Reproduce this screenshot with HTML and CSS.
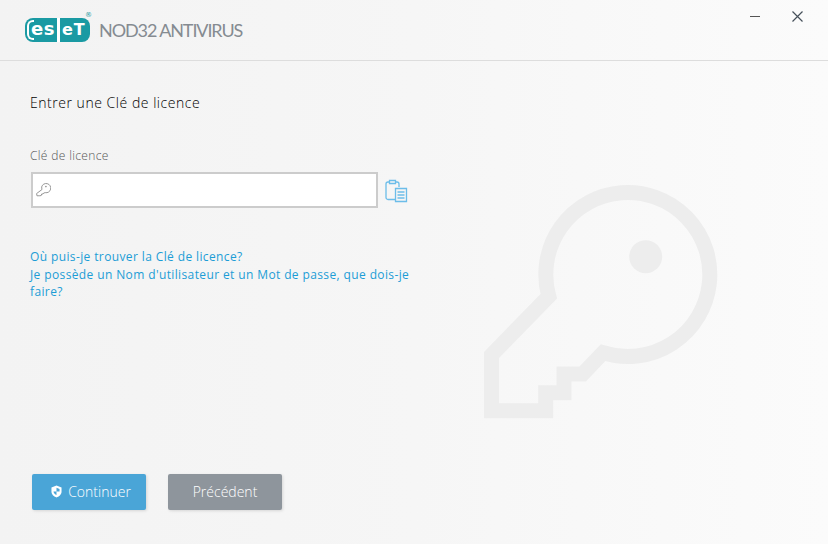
FILE: index.html
```html
<!DOCTYPE html>
<html lang="fr">
<head>
    <meta charset="UTF-8">
    <title>ESET NOD32 Antivirus</title>
    <link rel="stylesheet" href="styles.css">
</head>
<body>
    <header class="titlebar">
        <div class="logo">
            <span class="logo-ring"></span>
            <span class="logo-es">es</span>
            <span class="logo-bar"></span>
            <span class="logo-et">eT</span>
            <span class="logo-reg">®</span>
        </div>
        <div class="product">NOD32 ANTIVIRUS</div>
        <div class="window-controls">
            <svg class="win-icon" width="42" height="24" viewBox="0 0 42 24">
                <path d="M10 16.500h10" stroke="#555" stroke-width="1" fill="none"/>
            </svg>
            <svg class="win-icon" width="42" height="24" viewBox="0 0 42 24">
                <path d="M10.500 11.500l10 10M20.500 11.500l-10 10" stroke="#46505a" stroke-width="1.200" fill="none"/>
            </svg>
        </div>
    </header>

    <main class="content">
        <svg class="watermark" width="260" height="260" viewBox="470 170 260 260">
            <path d="M548.750 296.300A82 82 0 1 1 603 352.700L582.700 374H564V392.700H545.700V410.700H491.500V355Z" fill="none" stroke="#ededed" stroke-width="15"/>
            <circle cx="645.700" cy="256.700" r="16.500" fill="#ededed"/>
        </svg>

        <h1 class="title">Entrer une Clé de licence</h1>

        <label class="field-label">Clé de licence</label>
        <div class="field-row">
            <div class="key-input">
                <svg width="16" height="16" viewBox="0 0 18 18">
                    <path d="M7.500 5.500A5.200 5.200 0 1 1 11.500 12L9.800 12.400 9 13.500H7.500L7 15.200 5.500 15.500H2.200L1.800 13 7.800 8.500Z" fill="none" stroke="#8a8a8a" stroke-width="1"/>
                    <circle cx="12.300" cy="5.200" r="0.900" fill="#8a8a8a"/>
                </svg>
            </div>
            <svg class="paste" width="23" height="24" viewBox="0 0 23 24">
                <g fill="none" stroke="#6cbde9" stroke-width="1.300">
                    <path d="M10 20.500H3a2 2 0 0 1-2-2V5a2 2 0 0 1 2-2h1M11 3h1a2 2 0 0 1 2 2v3"/>
                    <path d="M4.500 1.500h6v3h-6z"/>
                    <path d="M10.500 9.500h11v13h-11z" fill="#f5f5f5"/>
                    <path d="M12.500 13h7M12.500 16h7M12.500 19h7"/>
                </g>
            </svg>
        </div>

        <div class="links">
            <a href="#">Où puis-je trouver la Clé de licence?</a>
            <a href="#">Je possède un Nom d'utilisateur et un Mot de passe, que dois-je faire?</a>
        </div>

        <div class="buttons">
            <button class="btn btn-primary">
                <svg width="11" height="13" viewBox="0 0 12 14">
                    <path d="M6 .5L11.500 2.500V7C11.500 10.500 8.500 12.700 6 13.500 3.500 12.700 .5 10.500 .5 7V2.500Z" fill="#fff"/>
                    <path d="M6 3V7H2.700C3 9 4.500 10.200 6 10.800V7H9.300V4.300Z" fill="#4aa5d7"/>
                </svg>
                Continuer
            </button>
            <button class="btn btn-secondary">Précédent</button>
        </div>
    </main>
</body>
</html>
```

FILE: styles.css
```css
html, body {
    height: 100%;
}
body {
    margin: 0;
    display: flex;
    flex-direction: column;
    height: 544px;
    overflow: hidden;
    font-family: "Open Sans", sans-serif;
    background: linear-gradient(to right, #f3f3f3 0%, #f6f6f6 50%, #fbfbfb 100%);
}
.titlebar {
    display: flex;
    align-items: center;
    height: 60px;
    padding-left: 25px;
    border-bottom: 1px solid #dddddd;
    flex-shrink: 0;
}
.logo {
    position: relative;
    width: 65px;
    height: 24px;
    background-color: #1a9aa3;
    border-radius: 8px;
    font-family: "DejaVu Sans", sans-serif;
    font-weight: bold;
    color: #fff;
}
.logo-ring {
    position: absolute;
    left: 2px;
    top: 2px;
    width: 7px;
    height: 20px;
    border: 2px solid #fff;
    border-right: 0;
    border-radius: 6px 0 0 6px;
    box-sizing: border-box;
}
.logo-es {
    position: absolute;
    left: 6px;
    top: 0;
    font-size: 18px;
    line-height: 22px;
    letter-spacing: 0.500px;
}
.logo-bar {
    position: absolute;
    left: 32px;
    top: 0;
    width: 3px;
    height: 24px;
    background-color: #fff;
}
.logo-et {
    position: absolute;
    left: 37px;
    top: 1px;
    font-size: 16px;
    line-height: 22px;
    letter-spacing: 1px;
}
.logo-reg {
    position: absolute;
    right: -2px;
    top: -7px;
    font-size: 7px;
    line-height: 8px;
    font-weight: normal;
    color: #1a9aa3;
}
.product {
    margin-left: 9px;
    font-family: "Lato", sans-serif;
    font-size: 18px;
    letter-spacing: -1.100px;
    color: #858b91;
}
.window-controls {
    display: flex;
    margin-left: auto;
    margin-right: 4px;
    align-self: flex-start;
}
.win-icon {
    display: block;
}
.content {
    position: relative;
    flex: 1;
    padding: 0 30px;
}
.watermark {
    position: absolute;
    left: 470px;
    top: 109px;
}
.title {
    position: relative;
    margin: 32px 0 0;
    font-size: 14px;
    font-weight: 300;
    line-height: 20px;
    letter-spacing: 0.530px;
    color: #000;
}
.field-label {
    position: relative;
    display: block;
    margin-top: 34px;
    font-size: 12px;
    font-weight: 300;
    line-height: 18px;
    letter-spacing: 0.350px;
    color: #555;
}
.field-row {
    position: relative;
    display: flex;
    align-items: center;
    margin-top: 7px;
}
.key-input {
    display: flex;
    align-items: center;
    box-sizing: border-box;
    width: 347px;
    height: 36px;
    margin-left: 1px;
    padding-left: 2px;
    background-color: #fff;
    border: 2px solid #cccccc;
}
.paste {
    margin-left: 7px;
    margin-top: 1px;
}
.links {
    position: relative;
    width: 385px;
    margin-top: 40px;
    font-size: 12px;
    font-weight: 400;
    line-height: 17.500px;
    letter-spacing: 0.380px;
}
.links a {
    display: block;
    color: #1c9dd6;
    text-decoration: none;
}
.buttons {
    position: relative;
    display: flex;
    gap: 22px;
    margin-top: 173px;
    margin-left: 2px;
}
.btn {
    display: flex;
    align-items: center;
    justify-content: center;
    gap: 6px;
    width: 114px;
    height: 36px;
    padding: 0;
    border: 0;
    border-radius: 2px;
    font-family: "Open Sans", sans-serif;
    font-size: 14px;
    font-weight: 300;
    color: #fff;
    box-shadow: 1px 1px 3px rgba(0, 0, 0, 0.12);
}
.btn-primary {
    padding-left: 4px;
    background-color: #4aa5d7;
}
.btn-secondary {
    background-color: #8e959c;
}
```
